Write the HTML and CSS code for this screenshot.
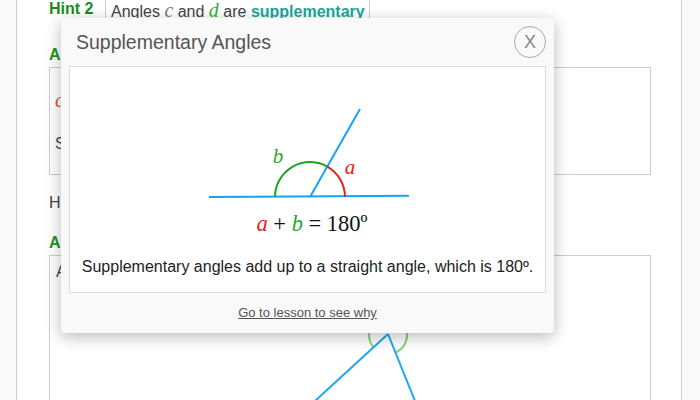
FILE: index.html
```html
<!DOCTYPE html>
<html>
<head>
<meta charset="utf-8">
<link rel="stylesheet" href="styles.css">
</head>
<body>
<div class="page">
  <div class="hint-row">
    <div class="hint-label">Hint 2</div>
    <div class="hint-cell">Angles <i class="var var-c">c</i> and <i class="var var-d">d</i> are <b class="term">supplementary</b></div>
  </div>
  <div class="heading h1">Answer</div>
  <div class="box box1">
    <p class="line"><i class="var var-red">c</i></p>
    <p class="line">So</p>
  </div>
  <p class="plain">Hint 3</p>
  <div class="heading h2">Answer</div>
  <div class="box box2">
    <p class="line">A</p>
    <svg class="bg-diagram" width="600" height="150" viewBox="0 0 600 150">
      <path d="M317.9 66.7 A19 19 0 1 1 339.2 71.6" fill="none" stroke="#8ccf7a" stroke-width="2"/>
      <line x1="332" y1="53" x2="259" y2="120" stroke="#1ea7f2" stroke-width="2"/>
      <line x1="332" y1="53" x2="359" y2="120" stroke="#1ea7f2" stroke-width="2"/>
    </svg>
  </div>
</div>

<div class="modal">
  <div class="modal-head">
    <div class="modal-title">Supplementary Angles</div>
    <div class="close">X</div>
  </div>
  <div class="modal-body">
    <svg class="diagram" width="475" height="176" viewBox="0 0 475 176">
      <line x1="139" y1="130" x2="339" y2="128.7" stroke="#12a6f2" stroke-width="2"/>
      <line x1="240" y1="130" x2="290" y2="42" stroke="#12a6f2" stroke-width="2"/>
      <path d="M205 130 A35 35 0 0 1 257.3 99.6" fill="none" stroke="#1fa51f" stroke-width="2"/>
      <path d="M257.3 99.6 A35 35 0 0 1 275 130" fill="none" stroke="#e3241b" stroke-width="2"/>
      <text x="208" y="96" class="lbl lbl-b">b</text>
      <text x="280" y="107" class="lbl lbl-a">a</text>
      <text x="242" y="164" class="eq"><tspan class="eq-a">a</tspan> + <tspan class="eq-b">b</tspan> = 180º</text>
    </svg>
    <p class="modal-text">Supplementary angles add up to a straight angle, which is 180º.</p>
  </div>
  <div class="modal-foot">
    <span class="lesson-link">Go to lesson to see why</span>
  </div>
</div>
</body>
</html>
```

FILE: styles.css
```css
html, body {
  margin: 0;
  padding: 0;
}
body {
  background: #f9f9f9;
  font-family: "Liberation Sans", Arial, sans-serif;
  font-size: 16px;
  line-height: 18px;
  color: #444;
  width: 700px;
  height: 400px;
  overflow: hidden;
  position: relative;
}
.page {
  margin-left: 16px;
  width: 666px;
  height: 400px;
  box-sizing: border-box;
  background: #fff;
  border-left: 1px solid #ccc;
  border-right: 1px solid #ccc;
  padding-left: 32px;
}
.hint-row {
  display: flex;
  height: 18px;
}
.hint-label {
  width: 56px;
  font-weight: bold;
  color: #1e8a1e;
}
.hint-cell {
  border-left: 1px solid #ccc;
  border-right: 1px solid #ccc;
  padding: 0 4px 0 5px;
  color: #444;
}
.var {
  font-family: "Liberation Serif", "DejaVu Serif", serif;
  font-style: italic;
  font-size: 20px;
  line-height: 1;
}
.var-c { color: #777; }
.var-d { color: #3ab03a; }
.var-red { color: #e04a3a; }
.term {
  color: #19a89b;
}
.heading {
  font-weight: bold;
  color: #22922a;
}
.h1 { margin-top: 28px; }
.h2 { margin-top: 22px; }
.box {
  margin-top: 3px;
  width: 602px;
  box-sizing: border-box;
  border: 1px solid #ccc;
  background: #fff;
}
.box1 {
  height: 108px;
  padding: 22px 5px 0 5px;
}
.box1 .line {
  margin: 0 0 24px 0;
}
.line {
  margin: 0;
}
.plain {
  margin: 19px 0 0 0;
}
.box2 {
  height: 160px;
  padding: 7px 6px 0 6px;
}
.bg-diagram {
  display: block;
}
.modal {
  position: absolute;
  left: 61px;
  top: 18px;
  width: 493px;
  height: 315px;
  box-sizing: border-box;
  background: #f9f9f9;
  border-radius: 4px;
  box-shadow: 0 4px 16px rgba(0, 0, 0, 0.28);
  padding: 0 8px;
  display: flex;
  flex-direction: column;
}
.modal-head {
  height: 48px;
  display: flex;
  align-items: center;
  justify-content: space-between;
  padding: 0 0 0 7px;
}
.modal-title {
  font-size: 19.5px;
  color: #555;
  margin-top: -1px;
}
.close {
  width: 30px;
  height: 30px;
  border: 1px solid #aaa;
  border-radius: 50%;
  display: flex;
  align-items: center;
  justify-content: center;
  font-size: 18px;
  font-weight: 300;
  color: #888;
  margin-top: -1px;
}
.modal-body {
  height: 227px;
  box-sizing: border-box;
  background: #fff;
  border: 1px solid #ddd;
}
.diagram {
  display: block;
}
.lbl {
  font-family: "Liberation Serif", serif;
  font-style: italic;
  font-size: 21px;
  text-anchor: middle;
}
.lbl-b { fill: #2aa52a; }
.lbl-a { fill: #e3241b; }
.eq {
  font-family: "Liberation Serif", serif;
  font-size: 22.5px;
  text-anchor: middle;
  fill: #111;
}
.eq-a { fill: #e3241b; font-style: italic; }
.eq-b { fill: #2aa52a; font-style: italic; }
.modal-text {
  margin: 15px 0 0 0;
  text-align: center;
  color: #222;
  font-size: 16px;
}
.modal-foot {
  flex: 1;
  display: flex;
  align-items: center;
  justify-content: center;
}
.lesson-link {
  font-size: 13px;
  color: #555;
  text-decoration: underline;
}
```
